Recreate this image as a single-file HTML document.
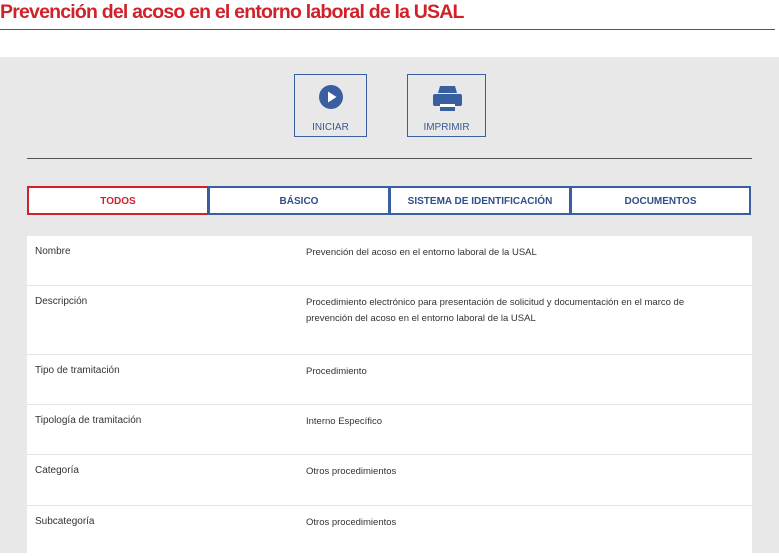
<!DOCTYPE html>
<html><head><meta charset="utf-8"><style>
body{margin:0;width:779px;height:553px;overflow:hidden;background:#fff;font-family:"Liberation Sans",sans-serif;}
h1{margin:0;position:absolute;left:0;top:1px;font-size:19.5px;color:#d0222a;font-weight:bold;letter-spacing:-0.8px;}
.rl{position:absolute;left:0;top:29px;width:775px;height:1px;background:#c0282b;}
.gray{position:absolute;left:0;top:57px;width:779px;height:496px;background:#e8e8e8;}
.btn{position:absolute;top:74px;height:63px;border:1px solid #3a5fa0;box-sizing:border-box;text-align:center;font-size:10px;color:#3a5a90;}
.btn span{position:absolute;left:0;right:0;top:47px;}
.hr{position:absolute;left:27px;top:158px;width:725px;height:1px;background:#555;}
.tab{position:absolute;top:186px;height:29px;box-sizing:border-box;border:2px solid #3a5fa0;background:#fff;font-size:10px;font-weight:bold;color:#2f4f88;text-align:center;line-height:27px;}
.tbl{position:absolute;left:27px;top:236px;width:725px;height:320px;background:#fff;}
.row{position:absolute;left:0;width:725px;border-top:1px solid #e4e4e4;font-size:9.5px;color:#333;}
.row .l{position:absolute;left:8px;top:10px;font-size:10px;}
.row .v{position:absolute;left:279px;top:9px;width:420px;line-height:16px;}
</style></head><body>
<h1>Prevención del acoso en el entorno laboral de la USAL</h1>
<div class="rl"></div>
<div class="gray"></div>
<div class="btn" style="left:294px;width:73px">
<svg style="position:absolute;left:24px;top:10px" width="24" height="24" viewBox="0 0 24 24"><circle cx="12" cy="12" r="12" fill="#3a5fa0"/><path d="M9 6.5L17.5 12L9 17.5Z" fill="#fff"/></svg>
<span>INICIAR</span></div>
<div class="btn" style="left:407px;width:79px">
<svg style="position:absolute;left:25px;top:10px" width="29" height="27" viewBox="0 0 29 27"><path d="M7 1h15l2 7H5z" fill="#3a5fa0"/><rect x="0" y="9" width="29" height="12" rx="2" fill="#3a5fa0"/><rect x="7" y="19" width="15" height="3" fill="#fff"/><rect x="7" y="22" width="15" height="4" fill="#3a5fa0"/></svg>
<span>IMPRIMIR</span></div>
<div class="hr"></div>
<div class="tab" style="left:27px;width:182px;border-color:#d0222a;color:#d0222a">TODOS</div>
<div class="tab" style="left:208px;width:182px">BÁSICO</div>
<div class="tab" style="left:389px;width:182px">SISTEMA DE IDENTIFICACIÓN</div>
<div class="tab" style="left:570px;width:181px">DOCUMENTOS</div>
<div class="tbl">
<div class="row" style="top:0;border-top:none"><div class="l">Nombre</div><div class="v">Prevención del acoso en el entorno laboral de la USAL</div></div>
<div class="row" style="top:49px"><div class="l">Descripción</div><div class="v">Procedimiento electrónico para presentación de solicitud y documentación en el marco de prevención del acoso en el entorno laboral de la USAL</div></div>
<div class="row" style="top:118px"><div class="l">Tipo de tramitación</div><div class="v">Procedimiento</div></div>
<div class="row" style="top:168px"><div class="l">Tipología de tramitación</div><div class="v">Interno Específico</div></div>
<div class="row" style="top:218px"><div class="l">Categoría</div><div class="v">Otros procedimientos</div></div>
<div class="row" style="top:269px"><div class="l">Subcategoría</div><div class="v">Otros procedimientos</div></div>
</div>
</body></html>
